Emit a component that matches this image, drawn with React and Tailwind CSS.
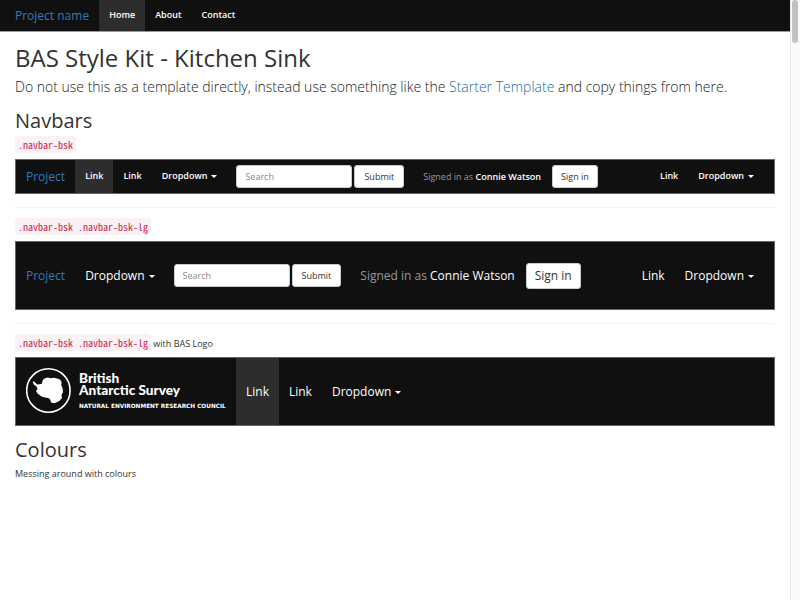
import React from 'react';

const Caret = () => (
  <span className="ml-1 inline-block border-x-3 border-t-3 border-x-transparent border-t-current align-middle" />
);

function NavLink({ children, active, caret, large }) {
  return (
    <a
      href="#"
      className={`flex items-center self-stretch px-[10px] text-white ${large ? 'text-[12px] font-medium' : 'pb-px text-[9px] font-semibold'} ${active ? 'bg-[#2d2d2d]' : ''}`}
    >
      <span>
        {children}
        {caret && <Caret />}
      </span>
    </a>
  );
}

function Brand({ children }) {
  return (
    <a href="#" className="flex items-center self-stretch px-[10px] text-[12px] text-[#337ab7]">
      {children}
    </a>
  );
}

function Bar({ children, large }) {
  return (
    <nav className={`flex items-center border border-[#666] bg-[#101010] ${large ? 'h-[69px]' : 'h-[35px]'}`}>
      {children}
    </nav>
  );
}

function SearchForm() {
  return (
    <form className="ml-[9px] flex items-center gap-[2px]" onSubmit={(e) => e.preventDefault()}>
      <input
        type="text"
        aria-label="Search"
        placeholder="Search"
        className="h-[23px] w-[116px] rounded-[3px] border border-[#ccc] bg-white px-2 text-[9px] placeholder:text-[#888]"
      />
      <button type="submit" className="h-[23px] rounded-[3px] border border-[#ccc] bg-white px-[9px] text-[9px] text-[#333]">
        Submit
      </button>
    </form>
  );
}

function Code({ children }) {
  return (
    <code className="rounded-[3px] bg-[#f9f2f4] px-[3px] py-px font-['Noto_Sans_Mono_CJK_SC','DejaVu_Sans_Mono',monospace] text-[10px] leading-[10px] text-[#c7254e]">
      {children}
    </code>
  );
}

function Logo() {
  return (
    <a href="#" aria-label="British Antarctic Survey" className="flex items-center self-stretch px-[10px]">
      <svg viewBox="0 0 200 50" className="h-[50px] w-[200px]" fill="#fff">
        <circle cx="22.4" cy="23.5" r="21.7" fill="none" stroke="#fff" strokeWidth="1.6" />
        <path d="M6.6 14.2L8.4 14.8 11 17.6 15.5 17 17 12.8 19 11.2 22 10.6 25 11.3 28 10.8 31 11.4 34 12.6 35.6 15 35.2 18 36.5 21 37 25 35.5 28 36 31 33.4 34 28.4 36.2 25 35.4 24.4 32.8 22.5 31 19 30.6 15.5 29.6 11.5 26.5 10 23.8 11.6 22 10.5 19.4 7.8 17.4Z" />
        <g fontFamily="'Gill Sans', Lato, sans-serif" fontWeight="900">
          <text x="53" y="16" fontSize="13.6">
            British
            <tspan x="53" dy="12.4">Antarctic Survey</tspan>
          </text>
        </g>
        <text x="53" y="41" fontFamily="'DejaVu Sans', sans-serif" fontWeight="700" fontSize="5.75">
          NATURAL ENVIRONMENT RESEARCH COUNCIL
        </text>
      </svg>
    </a>
  );
}

export default function App() {
  return (
    <div className="flex min-h-screen bg-white font-['Open_Sans',sans-serif] text-[9px] leading-[14px] text-[#333]">
      <div className="min-w-0 flex-1">
        <nav className="flex h-8 items-center border-b border-[#999] bg-[#101010] pl-[5px]">
          <Brand>Project name</Brand>
          <NavLink active>Home</NavLink>
          <NavLink>About</NavLink>
          <NavLink>Contact</NavLink>
        </nav>
        <main className="px-[15px]">
          <h1 className="mt-3 text-[24px] leading-7">BAS Style Kit - Kitchen Sink</h1>
          <p className="mt-[5px] text-[14px] leading-5 font-light text-[#222]">
            Do not use this as a template directly, instead use something like the{' '}
            <a href="#" className="text-[#23689f]">Starter Template</a> and copy things from here.
          </p>
          <h2 className="mt-3 text-[20px] leading-6">Navbars</h2>
          <p className="mt-[6px] mb-[6px]"><Code>.navbar-bsk</Code></p>
          <Bar>
            <Brand>Project</Brand>
            <NavLink active>Link</NavLink>
            <NavLink>Link</NavLink>
            <NavLink caret>Dropdown</NavLink>
            <SearchForm />
            <p className="ml-[19px] text-[#999]">
              Signed in as <a href="#" className="font-semibold text-white">Connie Watson</a>
            </p>
            <button type="button" className="ml-[11px] h-[23px] rounded-[3px] border border-[#ccc] bg-white px-2">Sign in</button>
            <div className="mr-[10px] ml-auto flex self-stretch">
              <NavLink>Link</NavLink>
              <NavLink caret>Dropdown</NavLink>
            </div>
          </Bar>
          <hr className="my-[13px] border-[#f4f4f4]" />
          <p className="mb-[6px]"><Code>.navbar-bsk .navbar-bsk-lg</Code></p>
          <Bar large>
            <Brand>Project</Brand>
            <NavLink large caret>Dropdown</NavLink>
            <SearchForm />
            <p className="ml-[19px] text-[12px] text-[#999]">
              Signed in as <a href="#" className="font-medium text-white">Connie Watson</a>
            </p>
            <button type="button" className="ml-[11px] h-[26px] rounded-[3px] border border-[#ccc] bg-white px-2 text-[12px]">Sign in</button>
            <div className="mr-[10px] ml-auto flex self-stretch">
              <NavLink large>Link</NavLink>
              <NavLink large caret>Dropdown</NavLink>
            </div>
          </Bar>
          <hr className="my-[13px] border-[#f4f4f4]" />
          <p className="mb-[6px]"><Code>.navbar-bsk .navbar-bsk-lg</Code> with BAS Logo</p>
          <Bar large>
            <Logo />
            <NavLink large active>Link</NavLink>
            <NavLink large>Link</NavLink>
            <NavLink large caret>Dropdown</NavLink>
          </Bar>
          <h2 className="mt-3 text-[20px] leading-6">Colours</h2>
          <p className="mt-[5px]">Messing around with colours</p>
        </main>
      </div>
      <div aria-hidden="true" className="w-[10px] border-l border-[#e8e8e8] bg-[#fafafa] pr-[2px] pl-px">
        <div className="h-[43px] rounded-full bg-[#c1c1c1]" />
      </div>
    </div>
  );
}
